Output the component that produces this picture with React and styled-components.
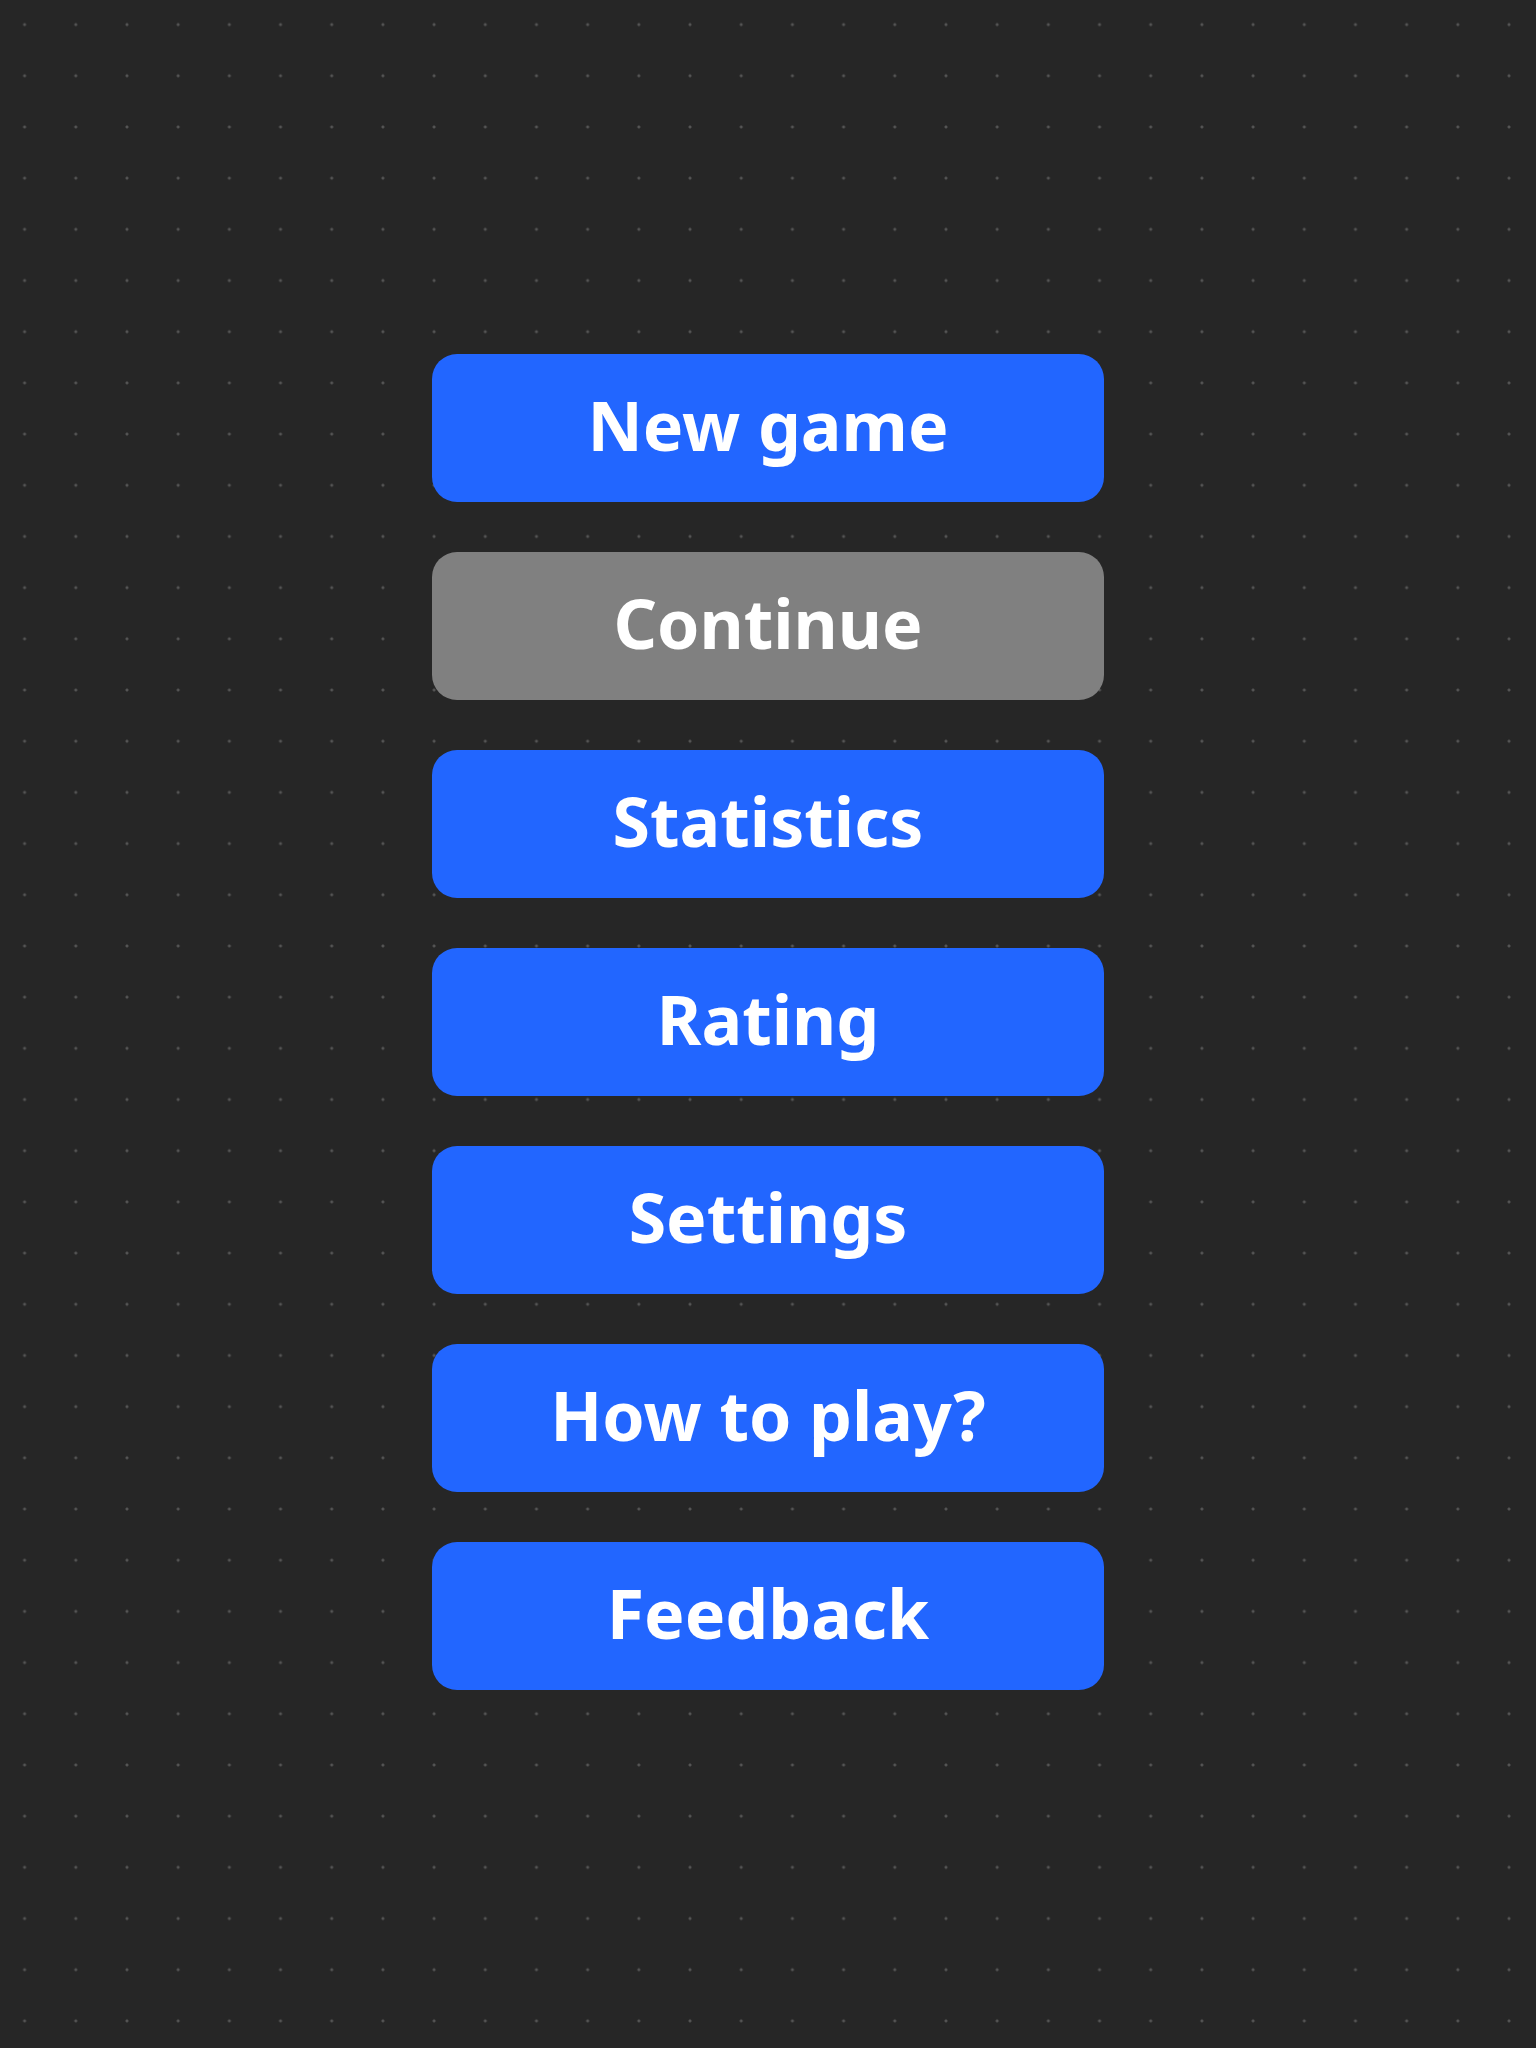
import styled, {createGlobalStyle} from "styled-components";

const GlobalStyle = createGlobalStyle`
    html, body {
        margin: 0;
        padding: 0;
        background-color: #262626;
    }
`

const Page = styled.div`
    min-height: 100vh;
    box-sizing: border-box;
    padding-bottom: 4px;
    display: flex;
    align-items: center;
    justify-content: center;
    background-color: #262626;
    background-image: radial-gradient(circle, #555555 1.2px, transparent 1.8px);
    background-size: 51.2px 51.2px;
    background-position: -1px -1px;
    font-family: "Noto Sans", "Open Sans", sans-serif;
`

const Menu = styled.nav`
    width: 672px;
    display: flex;
    flex-direction: column;
    gap: 50px;
`

const MenuButton = styled.button`
    height: 148px;
    border: none;
    border-radius: 25px;
    background-color: ${props => props.disabled ? '#808080' : '#2266ff'};
    color: #ffffff;
    font-family: inherit;
    font-size: 68px;
    font-weight: 700;
    cursor: ${props => props.disabled ? 'default' : 'pointer'};
    display: flex;
    align-items: center;
    justify-content: center;
    padding: 0 0 7px;
`

const items = [
    {label: 'New game'},
    {label: 'Continue', disabled: true},
    {label: 'Statistics'},
    {label: 'Rating'},
    {label: 'Settings'},
    {label: 'How to play?'},
    {label: 'Feedback'},
]

function App() {
    return (
        <>
            <GlobalStyle/>
            <Page>
                <Menu>
                    {items.map(item => (
                        <MenuButton key={item.label} disabled={item.disabled}>
                            {item.label}
                        </MenuButton>
                    ))}
                </Menu>
            </Page>
        </>
    );
}

export default App;
